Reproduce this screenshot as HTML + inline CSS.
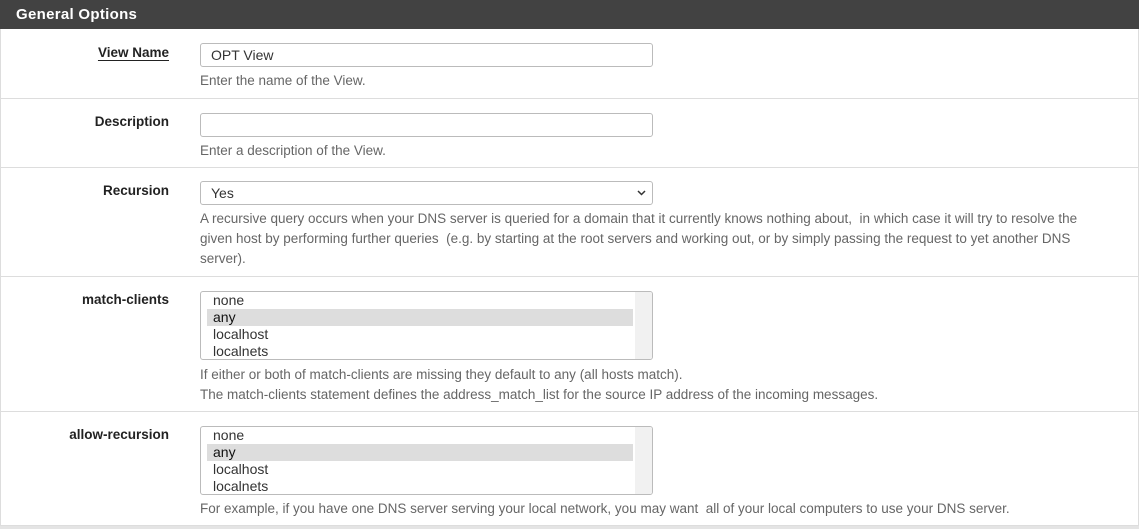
<!DOCTYPE html>
<html><head><style>
body{margin:0;background:#fff;font-family:"Liberation Sans",sans-serif;width:1139px;height:529px;overflow:hidden;position:relative}
.hdr{position:absolute;left:0;top:0;width:1139px;height:29px;background:#424242;color:#fff;font-size:15px;font-weight:bold;line-height:29px;letter-spacing:0.3px}
.hdr span{margin-left:16px}
.row{position:absolute;left:0;width:1137px;border-left:1px solid #ddd;border-right:1px solid #ddd;border-bottom:1px solid #ddd}
.lbl{position:absolute;right:969px;font-size:13.5px;font-weight:bold;color:#222;white-space:nowrap}
.inp{position:absolute;left:199px;width:451px;height:22px;border:1px solid #bbb;border-radius:3px;font-size:14px;color:#333;line-height:22px;box-sizing:content-box}
.inp span{margin-left:10px}
.help{position:absolute;left:199px;font-size:13.5px;color:#666;line-height:20px;width:920px}
.lb{position:absolute;left:199px;width:451px;height:67px;border:1px solid #bbb;border-radius:3px;font-size:14px;color:#333;overflow:hidden}
.lb p{margin:0;height:17px;line-height:17px;padding-left:6px;margin-left:6px;width:420px}
.lb .sel{background:#ddd;color:#111}
.sb{position:absolute;right:0;top:0;width:17px;height:67px;background:#f1f1f1}
</style></head><body>
<div class="hdr"><span>General Options</span></div>
<div class="row" style="top:29px;height:69px">
<div class="lbl" style="top:16px;text-decoration:underline;text-underline-offset:3px">View Name</div>
<div class="inp" style="top:14px"><span>OPT View</span></div>
<div class="help" style="top:42px">Enter the name of the View.</div>
</div>
<div class="row" style="top:99px;height:68px">
<div class="lbl" style="top:15px">Description</div>
<div class="inp" style="top:14px"></div>
<div class="help" style="top:42px">Enter a description of the View.</div>
</div>
<div class="row" style="top:168px;height:108px">
<div class="lbl" style="top:15px">Recursion</div>
<div class="inp" style="top:13px"><span>Yes</span><svg style="position:absolute;right:6px;top:8px" width="9" height="6" viewBox="0 0 9 6"><path d="M1 1l3.5 3.5L8 1" stroke="#333" stroke-width="1.5" fill="none"/></svg></div>
<div class="help" style="top:41px;width:900px">A recursive query occurs when your DNS server is queried for a domain that it currently knows nothing about,&nbsp; in which case it will try to resolve the given host by performing further queries&nbsp; (e.g. by starting at the root servers and working out, or by simply passing the request to yet another DNS server).</div>
</div>
<div class="row" style="top:277px;height:134px">
<div class="lbl" style="top:15px">match-clients</div>
<div class="lb" style="top:14px"><p>none</p><p class="sel">any</p><p>localhost</p><p>localnets</p><span class="sb"></span></div>
<div class="help" style="top:88px">If either or both of match-clients are missing they default to any (all hosts match).<br>The match-clients statement defines the address_match_list for the source IP address of the incoming messages.</div>
</div>
<div class="row" style="top:412px;height:113px">
<div class="lbl" style="top:15px">allow-recursion</div>
<div class="lb" style="top:14px"><p>none</p><p class="sel">any</p><p>localhost</p><p>localnets</p><span class="sb"></span></div>
<div class="help" style="top:87px">For example, if you have one DNS server serving your local network, you may want&nbsp; all of your local computers to use your DNS server.</div>
</div>
<div style="position:absolute;top:526px;left:0;width:1139px;height:3px;background:#e4e4e4"></div>
</body></html>
